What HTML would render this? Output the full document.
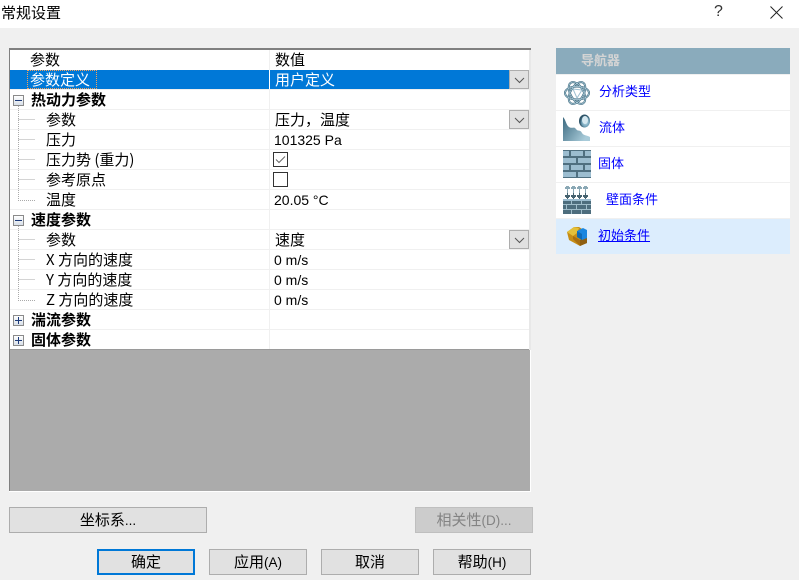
<!DOCTYPE html>
<html><head><meta charset="utf-8">
<style>
html,body{margin:0;padding:0}
body{width:799px;height:580px;overflow:hidden;background:#f0f0f0;position:relative;font-family:"Liberation Sans","WenQuanYi Zen Hei","Noto Sans CJK SC",sans-serif;font-size:14px;color:#000}
div,span,svg{position:absolute}
i{font-style:normal;font-size:13.5px;position:static;font-family:"Liberation Sans",sans-serif}
.t{white-space:nowrap;line-height:20px;height:20px}
.cjk{font-family:"WenQuanYi Zen Hei","Noto Sans CJK SC",sans-serif;font-size:15px}
.b{font-weight:bold}
.line{left:10px;width:519px;height:1px;background:#f0f0f0}
.btn{box-sizing:border-box;background:#e1e1e1;border:1px solid #adadad;text-align:center;font-size:15px;line-height:24px;font-family:"WenQuanYi Zen Hei","Noto Sans CJK SC",sans-serif;white-space:nowrap}
.dd{left:509px;width:20px;height:19px;box-sizing:border-box;background:#e1e1e1;border:1px solid #adadad}
.nav{left:599px;font-size:13px;color:#0000ff;font-family:"WenQuanYi Zen Hei","Noto Sans CJK SC",sans-serif;white-space:nowrap;line-height:16px}
.box{left:13px;width:11px;height:11px;box-sizing:border-box;border:1px solid #8a8a8a;background:linear-gradient(#fff,#d8dfe8)}
.ck{left:273px;width:15px;height:15px;box-sizing:border-box;border:1px solid #333;background:#fff}
</style></head>
<body>
<!-- title bar -->
<div style="left:0;top:0;width:799px;height:28px;background:#fff"></div>
<div class="t cjk" style="left:1px;top:3px">常规设置</div>
<div class="t" style="left:714px;top:2px;font-size:16px;color:#333">?</div>
<svg style="left:770px;top:6px" width="13" height="13"><path d="M0.5 0.5L12.5 12.5M12.5 0.5L0.5 12.5" stroke="#222" fill="none"/></svg>

<!-- grid -->
<div style="left:9px;top:48px;width:522px;height:443px;background:#ababab"></div>
<div style="left:9px;top:48px;width:522px;height:2px;background:#808080"></div>
<div style="left:9px;top:48px;width:1px;height:443px;background:#808080"></div>
<div style="left:529px;top:50px;width:2px;height:300px;background:#e8e8e8"></div>
<div style="left:530px;top:350px;width:1px;height:141px;background:#fff"></div>
<div style="left:9px;top:491px;width:522px;height:1px;background:#fff"></div>
<div style="left:10px;top:50px;width:519px;height:300px;background:#fff"></div>
<div style="left:269px;top:50px;width:1px;height:300px;background:#f0f0f0"></div>
<div style="left:10px;top:70px;width:499px;height:19px;background:#0078d7"></div>
<div style="left:269px;top:70px;width:1px;height:19px;background:#fff"></div>
<div style="left:27px;top:70px;width:70px;height:19px;box-sizing:border-box;border:1px dotted #f7a35c"></div>

<div class="line" style="top:89px"></div>
<div class="line" style="top:109px"></div><div class="line" style="top:129px"></div><div class="line" style="top:149px"></div>
<div class="line" style="top:169px"></div><div class="line" style="top:189px"></div><div class="line" style="top:209px"></div>
<div class="line" style="top:229px"></div><div class="line" style="top:249px"></div><div class="line" style="top:269px"></div>
<div class="line" style="top:289px"></div><div class="line" style="top:309px"></div><div class="line" style="top:329px"></div>
<div class="line" style="top:349px;background:#9a9a9a"></div>

<!-- tree dots -->
<svg style="left:17px;top:105px" width="20" height="200">
<g stroke="#aaa" stroke-dasharray="1 1" fill="none">
<path d="M1.5 1V95.5H18M1.5 14.5H18M1.5 34.5H18M1.5 54.5H18M1.5 74.5H18"/>
<path d="M1.5 121V195.5H18M1.5 134.5H18M1.5 154.5H18M1.5 174.5H18"/>
</g></svg>
<div class="box" style="top:95px"><div style="left:1px;top:4px;width:7px;height:1px;background:#1c3a7a"></div></div>
<div class="box" style="top:215px"><div style="left:1px;top:4px;width:7px;height:1px;background:#1c3a7a"></div></div>
<div class="box" style="top:315px"><div style="left:1px;top:4px;width:7px;height:1px;background:#1c3a7a"></div><div style="left:4px;top:1px;width:1px;height:7px;background:#1c3a7a"></div></div>
<div class="box" style="top:335px"><div style="left:1px;top:4px;width:7px;height:1px;background:#1c3a7a"></div><div style="left:4px;top:1px;width:1px;height:7px;background:#1c3a7a"></div></div>

<!-- left column -->
<div class="t cjk" style="left:30px;top:50px">参数</div>
<div class="t cjk" style="left:30px;top:70px;color:#fff">参数定义</div>
<div class="t cjk b" style="left:31px;top:90px">热动力参数</div>
<div class="t cjk" style="left:46px;top:110px">参数</div>
<div class="t cjk" style="left:46px;top:130px">压力</div>
<div class="t cjk" style="left:46px;top:150px">压力势 (重力)</div>
<div class="t cjk" style="left:46px;top:170px">参考原点</div>
<div class="t cjk" style="left:46px;top:190px">温度</div>
<div class="t cjk b" style="left:31px;top:210px">速度参数</div>
<div class="t cjk" style="left:46px;top:230px">参数</div>
<div class="t cjk" style="left:46px;top:250px">X 方向的速度</div>
<div class="t cjk" style="left:46px;top:270px">Y 方向的速度</div>
<div class="t cjk" style="left:46px;top:290px">Z 方向的速度</div>
<div class="t cjk b" style="left:31px;top:310px">湍流参数</div>
<div class="t cjk b" style="left:31px;top:330px">固体参数</div>

<!-- right column -->
<div class="t cjk" style="left:275px;top:50px">数值</div>
<div class="t cjk" style="left:275px;top:70px;color:#fff">用户定义</div>
<div class="t cjk" style="left:275px;top:110px">压力，温度</div>
<div class="t" style="left:274px;top:130px;font-size:14px">101325 Pa</div>
<div class="t" style="left:274px;top:190px;font-size:14px">20.05 °C</div>
<div class="t cjk" style="left:275px;top:230px">速度</div>
<div class="t" style="left:274px;top:250px;font-size:14px">0 m/s</div>
<div class="t" style="left:274px;top:270px;font-size:14px">0 m/s</div>
<div class="t" style="left:274px;top:290px;font-size:14px">0 m/s</div>

<div class="dd" style="top:70px"><svg style="left:4px;top:6px" width="11" height="7"><path d="M1 1L5.5 5.5L10 1" stroke="#555" fill="none"/></svg></div>
<div class="dd" style="top:110px"><svg style="left:4px;top:6px" width="11" height="7"><path d="M1 1L5.5 5.5L10 1" stroke="#555" fill="none"/></svg></div>
<div class="dd" style="top:230px"><svg style="left:4px;top:6px" width="11" height="7"><path d="M1 1L5.5 5.5L10 1" stroke="#555" fill="none"/></svg></div>
<div class="ck" style="top:152px"><svg style="left:1px;top:2px" width="11" height="9"><path d="M1 4.5L4 7.5L10 1.5" stroke="#666" fill="none"/></svg></div>
<div class="ck" style="top:172px"></div>

<!-- navigator -->
<div style="left:556px;top:48px;width:234px;height:26px;background:#8aabbc"></div>
<div class="cjk b" style="left:581px;top:52px;font-size:13px;line-height:16px;color:#d4d4d4;white-space:nowrap">导航器</div>
<div style="left:556px;top:75px;width:234px;height:35px;background:#fff"></div>
<div style="left:556px;top:111px;width:234px;height:35px;background:#fff"></div>
<div style="left:556px;top:147px;width:234px;height:35px;background:#fff"></div>
<div style="left:556px;top:183px;width:234px;height:35px;background:#fff"></div>
<div style="left:556px;top:219px;width:234px;height:35px;background:#dcedfd"></div>

<svg style="left:563px;top:79px" width="28" height="28" viewBox="0 0 28 28">
<g fill="none" stroke="#3f6b80" stroke-width="2">
<ellipse cx="14" cy="14" rx="12" ry="6.5"/>
<ellipse cx="14" cy="14" rx="12" ry="6.5" transform="rotate(60 14 14)"/>
<ellipse cx="14" cy="14" rx="12" ry="6.5" transform="rotate(120 14 14)"/>
</g>
<g fill="none" stroke="#b5d2de" stroke-width=".7">
<ellipse cx="14" cy="14" rx="12" ry="6.5"/>
<ellipse cx="14" cy="14" rx="12" ry="6.5" transform="rotate(60 14 14)"/>
<ellipse cx="14" cy="14" rx="12" ry="6.5" transform="rotate(120 14 14)"/>
</g>
<path d="M10 10L19 11L14 19Z" fill="#fff" stroke="#9fc0d0"/>
</svg>
<svg style="left:563px;top:114px" width="28" height="28" viewBox="0 0 28 28">
<defs><linearGradient id="f" x1="0" y1="0" x2="1" y2="0.6"><stop offset="0" stop-color="#3d6a80"/><stop offset="1" stop-color="#a8cbd9"/></linearGradient>
<radialGradient id="d" cx=".6" cy=".6"><stop offset="0" stop-color="#bfe0ee"/><stop offset=".7" stop-color="#6f9fb5"/><stop offset="1" stop-color="#2f5468"/></radialGradient></defs>
<path d="M0 3C3 6 3 11 6 13C9 15 11 12 13 15C15 18 17 15 19 19C21 22 24 21 27 23V27H0Z" fill="url(#f)"/>
<ellipse cx="21.5" cy="7" rx="5.5" ry="6.5" fill="url(#d)"/>
<ellipse cx="22" cy="6" rx="3" ry="4" fill="#d5e8f0"/>
</svg>
<svg style="left:563px;top:150px" width="28" height="28" shape-rendering="crispEdges">
<rect width="28" height="28" fill="#4f6f80"/>
<g fill="#9cbdd0">
<rect x="0" y="1" width="6" height="5"/><rect x="8" y="1" width="12" height="5"/><rect x="22" y="1" width="6" height="5"/>
<rect x="0" y="8" width="13" height="5"/><rect x="15" y="8" width="13" height="5"/>
<rect x="0" y="15" width="6" height="5"/><rect x="8" y="15" width="12" height="5"/><rect x="22" y="15" width="6" height="5"/>
<rect x="0" y="22" width="13" height="5"/><rect x="15" y="22" width="13" height="5"/>
</g></svg>
<svg style="left:563px;top:186px" width="28" height="28" shape-rendering="crispEdges">
<g fill="#8aa8b5">
<rect x="3" y="0" width="3" height="1"/><rect x="9" y="0" width="3" height="1"/><rect x="15" y="0" width="3" height="1"/><rect x="21" y="0" width="3" height="1"/>
<rect x="2" y="1" width="5" height="2"/><rect x="8" y="1" width="5" height="2"/><rect x="14" y="1" width="5" height="2"/><rect x="20" y="1" width="5" height="2"/>
<rect x="4" y="3" width="1" height="4"/><rect x="10" y="3" width="1" height="4"/><rect x="16" y="3" width="1" height="4"/><rect x="22" y="3" width="1" height="4"/></g>
<g fill="#45626f"><rect x="4" y="7" width="1" height="6"/><rect x="10" y="7" width="1" height="6"/><rect x="16" y="7" width="1" height="6"/><rect x="22" y="7" width="1" height="6"/>
<rect x="2" y="9" width="5" height="2"/><rect x="8" y="9" width="5" height="2"/><rect x="14" y="9" width="5" height="2"/><rect x="20" y="9" width="5" height="2"/>
<rect x="3" y="11" width="3" height="1"/><rect x="9" y="11" width="3" height="1"/><rect x="15" y="11" width="3" height="1"/><rect x="21" y="11" width="3" height="1"/></g>
<rect y="13" width="28" height="2" fill="#9cbdd0"/>
<rect y="15" width="28" height="13" fill="#9fbcc9"/>
<g fill="#4d6d7d"><rect x="0" y="15" width="8" height="3"/><rect x="9" y="15" width="9" height="3"/><rect x="19" y="15" width="9" height="3"/>
<rect x="0" y="19" width="3" height="4"/><rect x="4" y="19" width="9" height="4"/><rect x="14" y="19" width="9" height="4"/><rect x="24" y="19" width="4" height="4"/>
<rect x="0" y="24" width="8" height="4"/><rect x="9" y="24" width="9" height="4"/><rect x="19" y="24" width="9" height="4"/></g></svg>
<svg style="left:566px;top:225px" width="22" height="21" viewBox="0 0 22 21">
<path d="M1 7L8 2H13L21 7V18L14 21L3 15Z" fill="#c68d16"/>
<path d="M1 7L8 2L13 3L11 8L7 11Z" fill="#e3c03a"/>
<path d="M7 11V14L14 21V15Z" fill="#a86e10"/>
<path d="M14 15L21 12V18L14 21Z" fill="#8f5f12"/>
<path d="M11 6L17 3L21 5V13L16 15L11 12Z" fill="#1a86df"/>
<path d="M11 6L16 9V15L11 12Z" fill="#0f6ab5"/>
</svg>

<div class="nav" style="top:83px">分析类型</div>
<div class="nav" style="top:119px">流体</div>
<div class="nav" style="left:598px;top:155px">固体</div>
<div class="nav" style="left:606px;top:191px">壁面条件</div>
<div class="nav" style="left:598px;top:227px;text-decoration:underline">初始条件</div>

<!-- buttons -->
<div class="btn" style="left:9px;top:507px;width:198px;height:26px">坐标系<i>...</i></div>
<div class="btn" style="left:415px;top:507px;width:118px;height:26px;background:#ccc;border-color:#bfbfbf;color:#838383">相关性<i>(D)...</i></div>
<div class="btn" style="left:97px;top:549px;width:98px;height:26px;border:2px solid #0078d7;line-height:22px">确定</div>
<div class="btn" style="left:209px;top:549px;width:98px;height:26px">应用<i>(A)</i></div>
<div class="btn" style="left:321px;top:549px;width:98px;height:26px">取消</div>
<div class="btn" style="left:433px;top:549px;width:98px;height:26px">帮助<i>(H)</i></div>
</body></html>
